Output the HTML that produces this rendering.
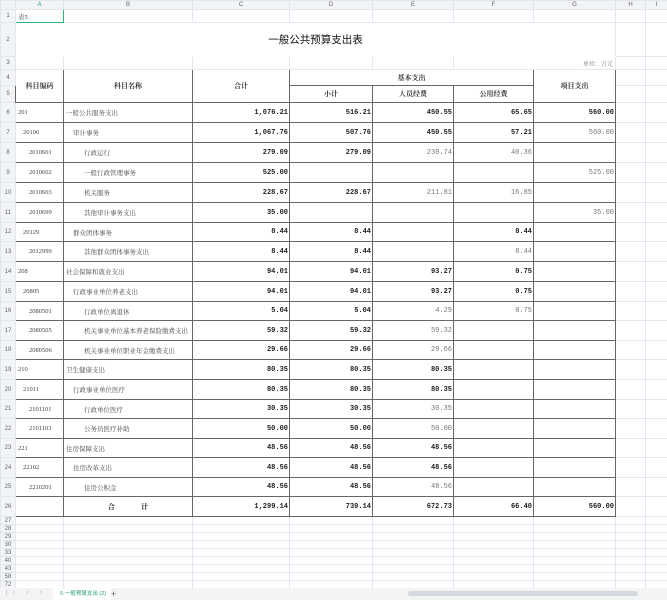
<!DOCTYPE html>
<html><head><meta charset="utf-8"><style>
*{margin:0;padding:0;box-sizing:border-box}
body{width:667px;height:600px;overflow:hidden;background:#fff;font-family:"Liberation Serif","Noto Serif CJK SC",serif;font-size:6.5px;color:#444;position:relative}
table{border-collapse:collapse;table-layout:fixed;position:absolute;left:0;top:0;width:667px}
td{border:1px solid #e3e6ee;overflow:hidden;white-space:nowrap;padding:0 2px;vertical-align:middle}
td.h{background:#f3f4f6;color:#666;font-family:"Liberation Sans",sans-serif;font-size:6px;text-align:center;padding:0}
tr.ch td{background:#f3f4f6;color:#666;font-family:"Liberation Sans",sans-serif;font-size:6px;text-align:center;height:9px;padding:0}
.d{border:1px solid #666}
.r{text-align:right;font-family:"Liberation Mono",monospace;font-size:7px;padding-right:1px}
.c{text-align:center}
.b{font-weight:bold;color:#222}
.n{color:#777}
.hd{font-weight:bold;text-align:center;color:#333;font-size:7px}
.l1{padding-left:7px}.l2{padding-left:13px}
.m1{padding-left:9px}.m2{padding-left:20px}
.tabs{position:absolute;left:0;top:588px;width:667px;height:12px;background:#f3f4f6;font-family:"Liberation Sans",sans-serif;font-size:6px;color:#aaa}
</style></head><body>
<table>
<colgroup><col style="width:15px"><col style="width:48px"><col style="width:129px"><col style="width:97px"><col style="width:83px"><col style="width:81px"><col style="width:80px"><col style="width:82px"><col style="width:30px"><col style="width:22px"></colgroup>
<tr class="ch"><td></td><td style="color:#2a9d6a">A</td><td>B</td><td>C</td><td>D</td><td>E</td><td>F</td><td>G</td><td>H</td><td>I</td></tr>
<tr style="height:13px"><td class="h">1</td><td style="border:1.5px solid #2fb57a">表5</td><td></td><td></td><td></td><td></td><td></td><td></td><td></td><td></td></tr>
<tr style="height:34px"><td class="h">2</td><td colspan="7" class="c" style="font-family:'Liberation Sans','Noto Sans CJK SC',sans-serif;font-size:10.5px;color:#111;border-color:#fff #e3e6ee">一般公共预算支出表</td><td></td><td></td></tr>
<tr style="height:13px"><td class="h">3</td><td></td><td></td><td></td><td></td><td></td><td colspan="2" style="text-align:right;color:#777;font-size:6px">单位：万元</td><td></td><td></td></tr>
<tr style="height:16px"><td class="h">4</td><td rowspan="2" class="d hd">科目编码</td><td rowspan="2" class="d hd">科目名称</td><td rowspan="2" class="d hd">合计</td><td colspan="3" class="d hd">基本支出</td><td rowspan="2" class="d hd">项目支出</td><td></td><td></td></tr>
<tr style="height:17px"><td class="h">5</td><td class="d hd">小计</td><td class="d hd">人员经费</td><td class="d hd">公用经费</td><td></td><td></td></tr>
<tr style="height:20px"><td class="h">6</td><td class="d">201</td><td class="d">一般公共服务支出</td><td class="d r b">1,076.21</td><td class="d r b">516.21</td><td class="d r b">450.55</td><td class="d r b">65.65</td><td class="d r b">560.00</td><td></td><td></td></tr>
<tr style="height:20px"><td class="h">7</td><td class="d l1">20106</td><td class="d m1">审计事务</td><td class="d r b">1,067.76</td><td class="d r b">507.76</td><td class="d r b">450.55</td><td class="d r b">57.21</td><td class="d r n">560.00</td><td></td><td></td></tr>
<tr style="height:20px"><td class="h">8</td><td class="d l2">2010601</td><td class="d m2">行政运行</td><td class="d r b">279.09</td><td class="d r b">279.09</td><td class="d r n">238.74</td><td class="d r n">40.36</td><td class="d"></td><td></td><td></td></tr>
<tr style="height:20px"><td class="h">9</td><td class="d l2">2010602</td><td class="d m2">一般行政管理事务</td><td class="d r b">525.00</td><td class="d"></td><td class="d"></td><td class="d"></td><td class="d r n">525.00</td><td></td><td></td></tr>
<tr style="height:20px"><td class="h">10</td><td class="d l2">2010603</td><td class="d m2">机关服务</td><td class="d r b">228.67</td><td class="d r b">228.67</td><td class="d r n">211.81</td><td class="d r n">16.85</td><td class="d"></td><td></td><td></td></tr>
<tr style="height:20px"><td class="h">11</td><td class="d l2">2010699</td><td class="d m2">其他审计事务支出</td><td class="d r b">35.00</td><td class="d"></td><td class="d"></td><td class="d"></td><td class="d r n">35.00</td><td></td><td></td></tr>
<tr style="height:19px"><td class="h">12</td><td class="d l1">20129</td><td class="d m1">群众团体事务</td><td class="d r b">8.44</td><td class="d r b">8.44</td><td class="d"></td><td class="d r b">8.44</td><td class="d"></td><td></td><td></td></tr>
<tr style="height:20px"><td class="h">13</td><td class="d l2">2012999</td><td class="d m2">其他群众团体事务支出</td><td class="d r b">8.44</td><td class="d r b">8.44</td><td class="d"></td><td class="d r n">8.44</td><td class="d"></td><td></td><td></td></tr>
<tr style="height:20px"><td class="h">14</td><td class="d">208</td><td class="d">社会保障和就业支出</td><td class="d r b">94.01</td><td class="d r b">94.01</td><td class="d r b">93.27</td><td class="d r b">0.75</td><td class="d"></td><td></td><td></td></tr>
<tr style="height:20px"><td class="h">15</td><td class="d l1">20805</td><td class="d m1">行政事业单位养老支出</td><td class="d r b">94.01</td><td class="d r b">94.01</td><td class="d r b">93.27</td><td class="d r b">0.75</td><td class="d"></td><td></td><td></td></tr>
<tr style="height:19px"><td class="h">16</td><td class="d l2">2080501</td><td class="d m2">行政单位离退休</td><td class="d r b">5.04</td><td class="d r b">5.04</td><td class="d r n">4.29</td><td class="d r n">0.75</td><td class="d"></td><td></td><td></td></tr>
<tr style="height:20px"><td class="h">17</td><td class="d l2">2080505</td><td class="d m2">机关事业单位基本养老保险缴费支出</td><td class="d r b">59.32</td><td class="d r b">59.32</td><td class="d r n">59.32</td><td class="d"></td><td class="d"></td><td></td><td></td></tr>
<tr style="height:19px"><td class="h">18</td><td class="d l2">2080506</td><td class="d m2">机关事业单位职业年金缴费支出</td><td class="d r b">29.66</td><td class="d r b">29.66</td><td class="d r n">29.66</td><td class="d"></td><td class="d"></td><td></td><td></td></tr>
<tr style="height:20px"><td class="h">19</td><td class="d">210</td><td class="d">卫生健康支出</td><td class="d r b">80.35</td><td class="d r b">80.35</td><td class="d r b">80.35</td><td class="d"></td><td class="d"></td><td></td><td></td></tr>
<tr style="height:20px"><td class="h">20</td><td class="d l1">21011</td><td class="d m1">行政事业单位医疗</td><td class="d r b">80.35</td><td class="d r b">80.35</td><td class="d r b">80.35</td><td class="d"></td><td class="d"></td><td></td><td></td></tr>
<tr style="height:19px"><td class="h">21</td><td class="d l2">2101101</td><td class="d m2">行政单位医疗</td><td class="d r b">30.35</td><td class="d r b">30.35</td><td class="d r n">30.35</td><td class="d"></td><td class="d"></td><td></td><td></td></tr>
<tr style="height:20px"><td class="h">22</td><td class="d l2">2101103</td><td class="d m2">公务员医疗补助</td><td class="d r b">50.00</td><td class="d r b">50.00</td><td class="d r n">50.00</td><td class="d"></td><td class="d"></td><td></td><td></td></tr>
<tr style="height:19px"><td class="h">23</td><td class="d">221</td><td class="d">住房保障支出</td><td class="d r b">48.56</td><td class="d r b">48.56</td><td class="d r b">48.56</td><td class="d"></td><td class="d"></td><td></td><td></td></tr>
<tr style="height:20px"><td class="h">24</td><td class="d l1">22102</td><td class="d m1">住房改革支出</td><td class="d r b">48.56</td><td class="d r b">48.56</td><td class="d r b">48.56</td><td class="d"></td><td class="d"></td><td></td><td></td></tr>
<tr style="height:19px"><td class="h">25</td><td class="d l2">2210201</td><td class="d m2">住房公积金</td><td class="d r b">48.56</td><td class="d r b">48.56</td><td class="d r n">48.56</td><td class="d"></td><td class="d"></td><td></td><td></td></tr>
<tr style="height:20px"><td class="h">26</td><td class="d"></td><td class="d c b" style="font-size:7px">合&nbsp;&nbsp;&nbsp;&nbsp;&nbsp;&nbsp;&nbsp;&nbsp;&nbsp;&nbsp;&nbsp;&nbsp;&nbsp;&nbsp;&nbsp;计</td><td class="d r b">1,299.14</td><td class="d r b">739.14</td><td class="d r b">672.73</td><td class="d r b">66.40</td><td class="d r b">560.00</td><td></td><td></td></tr>
<tr style="height:8px"><td class="h">27</td><td></td><td></td><td></td><td></td><td></td><td></td><td></td><td></td><td></td></tr>
<tr style="height:8px"><td class="h">28</td><td></td><td></td><td></td><td></td><td></td><td></td><td></td><td></td><td></td></tr>
<tr style="height:8px"><td class="h">29</td><td></td><td></td><td></td><td></td><td></td><td></td><td></td><td></td><td></td></tr>
<tr style="height:8px"><td class="h">30</td><td></td><td></td><td></td><td></td><td></td><td></td><td></td><td></td><td></td></tr>
<tr style="height:8px"><td class="h">33</td><td></td><td></td><td></td><td></td><td></td><td></td><td></td><td></td><td></td></tr>
<tr style="height:8px"><td class="h">40</td><td></td><td></td><td></td><td></td><td></td><td></td><td></td><td></td><td></td></tr>
<tr style="height:8px"><td class="h">43</td><td></td><td></td><td></td><td></td><td></td><td></td><td></td><td></td><td></td></tr>
<tr style="height:8px"><td class="h">58</td><td></td><td></td><td></td><td></td><td></td><td></td><td></td><td></td><td></td></tr>
<tr style="height:8px"><td class="h">72</td><td></td><td></td><td></td><td></td><td></td><td></td><td></td><td></td><td></td></tr>
</table>
<div class="tabs">
<span style="position:absolute;left:6px;top:2px;letter-spacing:5px">|‹ ‹ › ›|</span>
<span style="position:absolute;left:53px;top:0;height:12px;width:58px;background:#fff;color:#2a9d6a;font-family:'Liberation Sans','Noto Sans CJK SC',sans-serif;font-size:5.5px;line-height:12px;padding-left:7px">5-一般预算支出 (2)</span>
<span style="position:absolute;left:111px;top:0;color:#666;font-size:9px;line-height:12px">+</span>
<div style="position:absolute;left:408px;top:3px;width:230px;height:5px;background:#d5d8de;border-radius:3px"></div>
</div>
</body></html>
